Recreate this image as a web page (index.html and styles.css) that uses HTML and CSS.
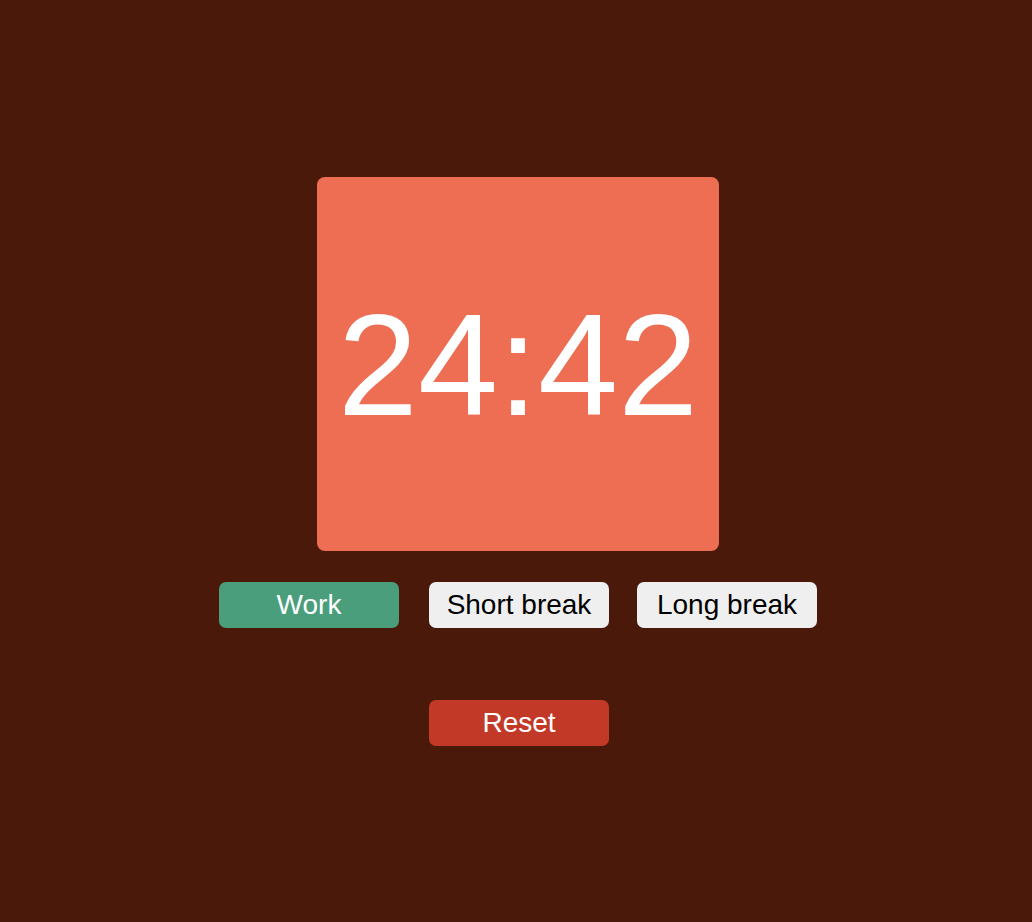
FILE: index.html
```html
<!DOCTYPE html>
<html lang="en">
<head>
<meta charset="utf-8">
<title>Pomodoro</title>
<link rel="stylesheet" href="styles.css">
</head>
<body>
<main class="app">
  <div class="timer">24:42</div>
  <div class="modes">
    <button class="btn btn-active">Work</button>
    <button class="btn btn-mode">Short break</button>
    <button class="btn btn-mode">Long break</button>
  </div>
  <button class="btn btn-reset">Reset</button>
</main>
</body>
</html>
```
FILE: styles.css
```css
html, body {
  margin: 0;
  padding: 0;
  height: 100%;
}
body {
  background: #4a190a;
  font-family: "Liberation Sans", Arial, Helvetica, sans-serif;
  display: flex;
  align-items: center;
  justify-content: center;
  padding-left: 4px;
  box-sizing: border-box;
}
.app {
  display: flex;
  flex-direction: column;
  align-items: center;
}
.timer {
  width: 402px;
  box-sizing: border-box;
  padding: 117px 0 113px;
  background: #ed6e53;
  border-radius: 8px;
  color: #ffffff;
  font-size: 144px;
  line-height: 144px;
  text-align: center;
}
.modes {
  display: flex;
  gap: 28px;
  margin-top: 31px;
}
.btn {
  width: 180px;
  height: 46px;
  padding: 0;
  border: none;
  border-radius: 7px;
  font-family: "Liberation Sans", Arial, Helvetica, sans-serif;
  font-size: 28px;
  line-height: 46px;
  cursor: pointer;
}
.btn-active {
  margin-right: 2px;
  background: #4a9e7c;
  color: #ffffff;
}
.btn-mode {
  background: #efefef;
  color: #000000;
}
.btn-reset {
  margin-top: 72px;
  margin-left: 2px;
  background: #c33927;
  color: #ffffff;
}
```
